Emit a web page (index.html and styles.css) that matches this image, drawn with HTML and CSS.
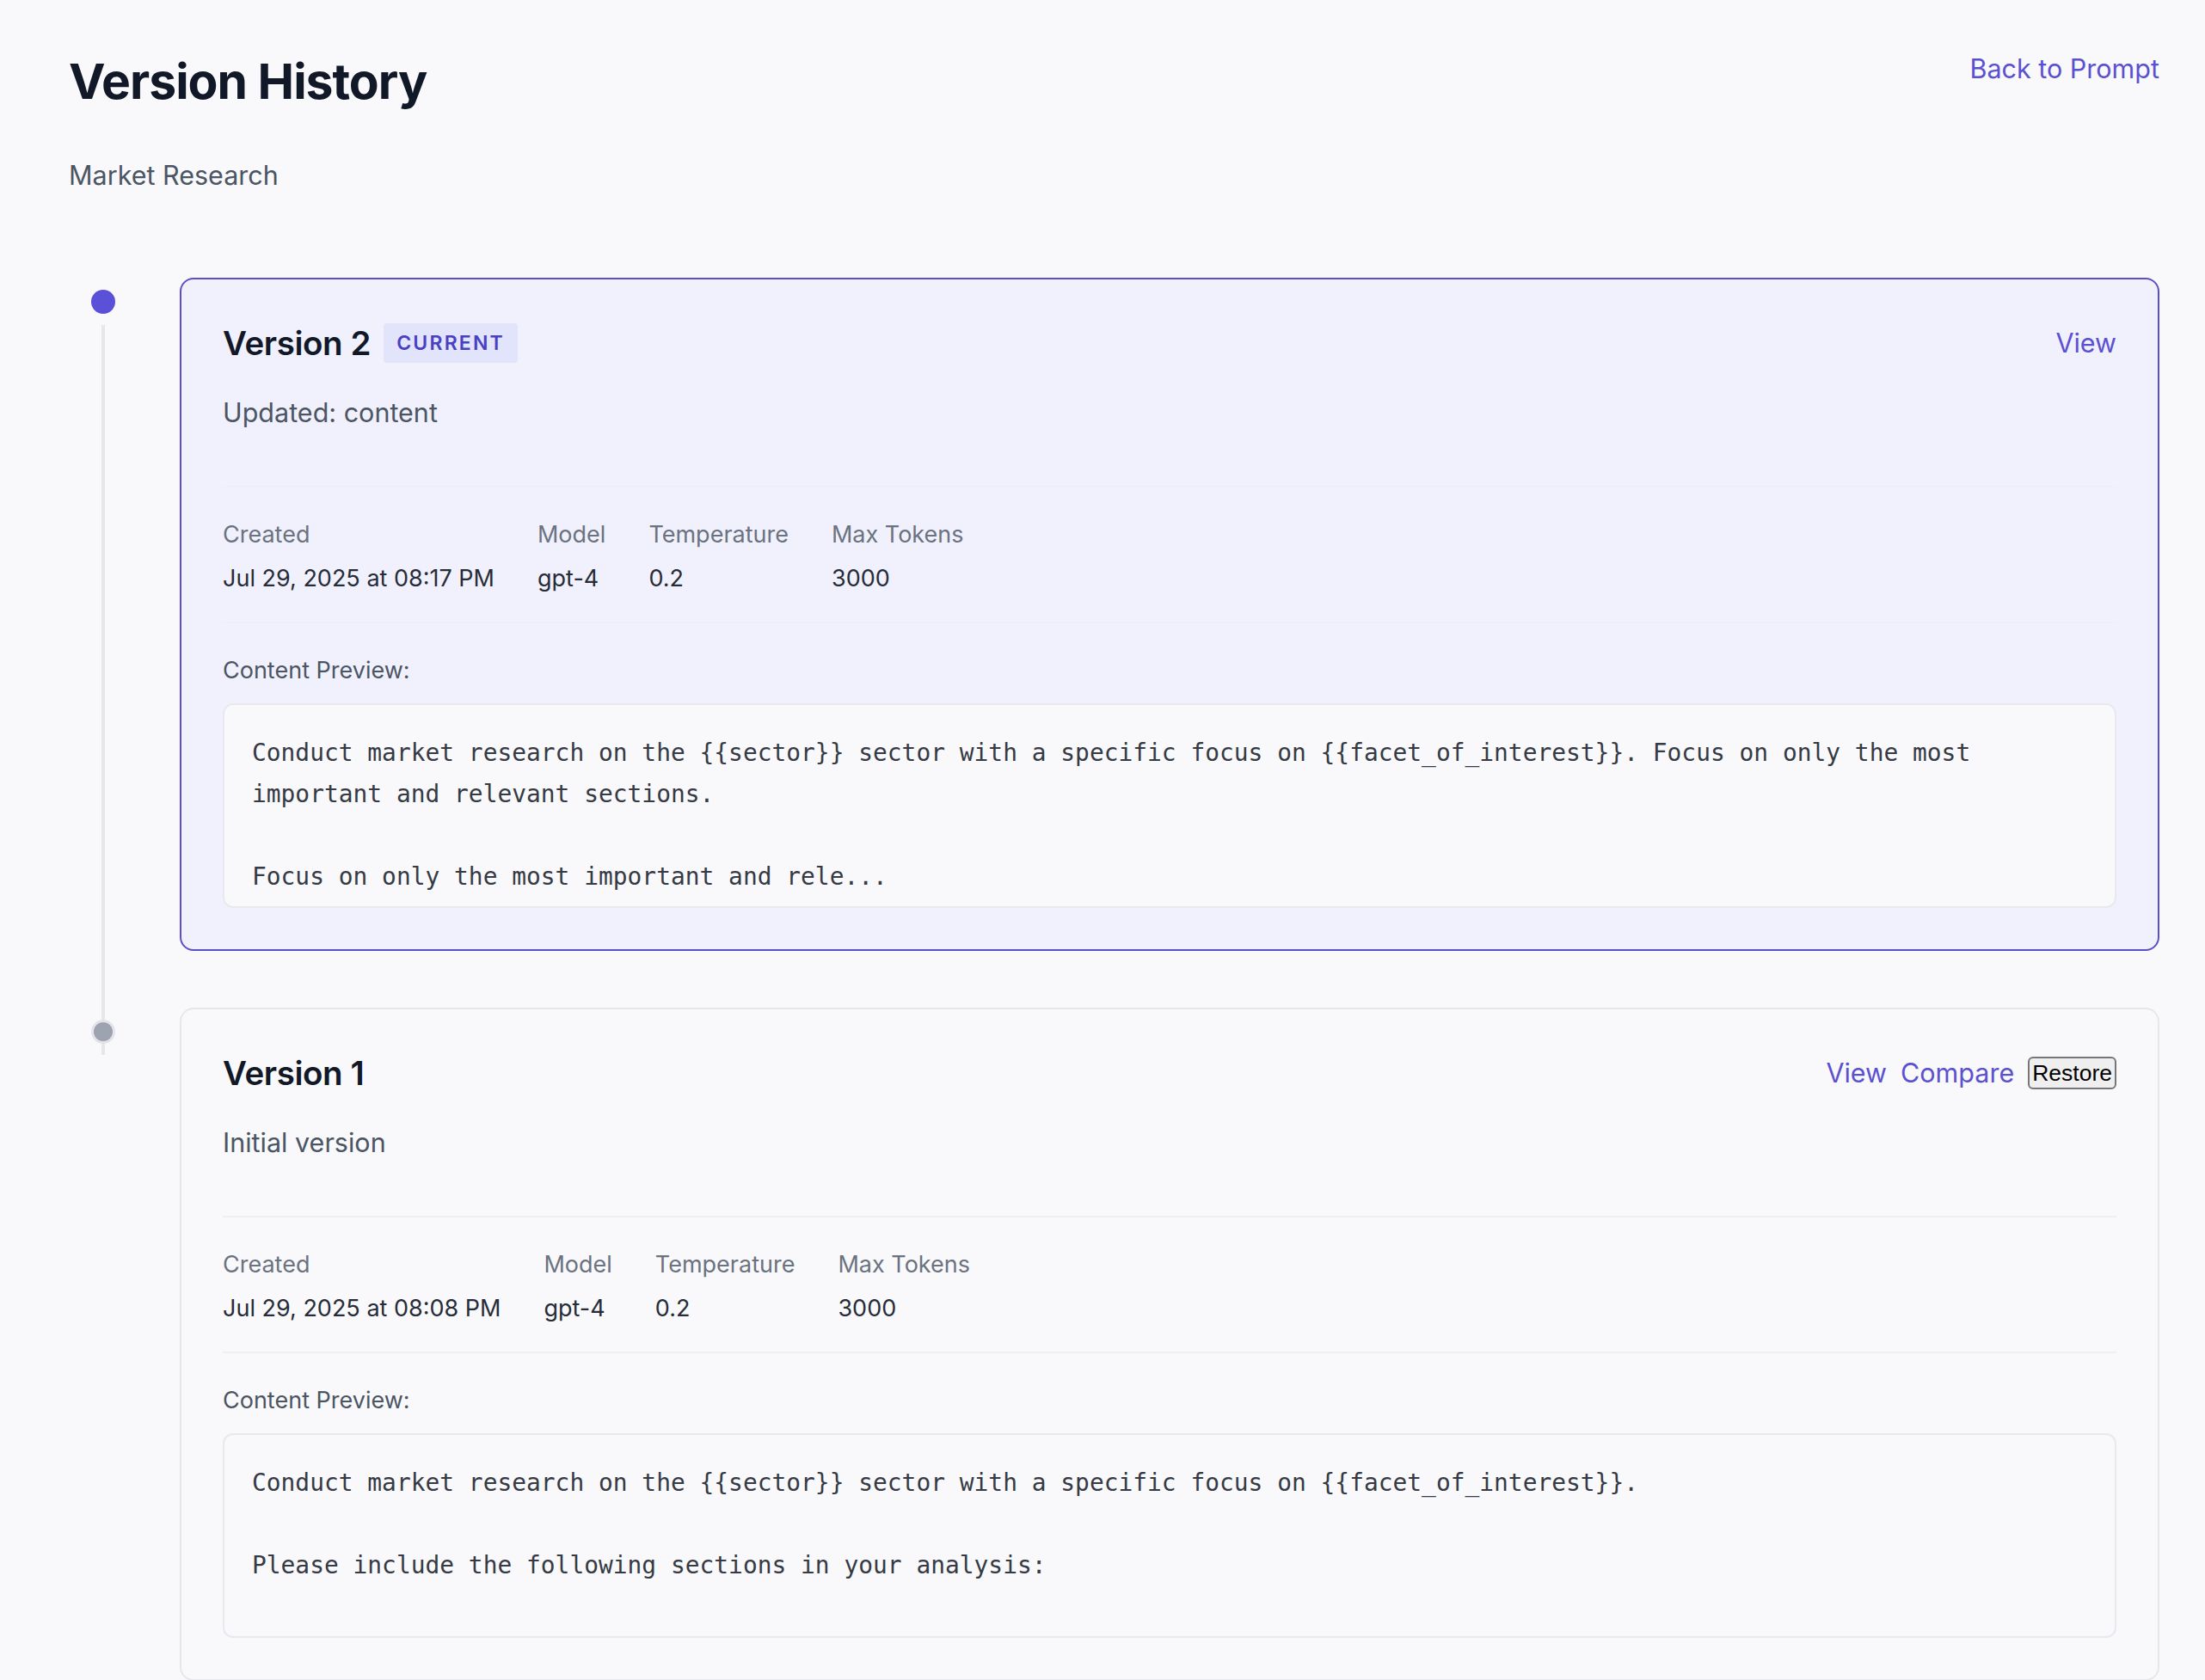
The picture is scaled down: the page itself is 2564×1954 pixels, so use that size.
FILE: index.html
```html
<!DOCTYPE html>
<html lang="en">
<head>
<meta charset="utf-8">
<title>Version History</title>
<link rel="stylesheet" href="styles.css">
</head>
<body>
<div class="page">
  <header class="top">
    <div class="heading">
      <h1 class="title">Version History</h1>
      <p class="subtitle">Market Research</p>
    </div>
    <a class="back link" href="#">Back to Prompt</a>
  </header>

  <div class="timeline">
    <div class="item">
      <div class="rail">
        <span class="line"></span>
        <span class="dot dot-current"></span>
      </div>
      <section class="card card-current">
        <div class="card-head">
          <div class="card-title">
            <h2 class="version">Version 2</h2>
            <span class="badge">CURRENT</span>
          </div>
          <div class="actions">
            <a class="link" href="#">View</a>
          </div>
        </div>
        <p class="desc">Updated: content</p>
        <div class="meta">
          <div class="meta-col"><div class="meta-label">Created</div><div class="meta-value">Jul 29, 2025 at 08:17 PM</div></div>
          <div class="meta-col"><div class="meta-label">Model</div><div class="meta-value">gpt-4</div></div>
          <div class="meta-col"><div class="meta-label">Temperature</div><div class="meta-value">0.2</div></div>
          <div class="meta-col"><div class="meta-label">Max Tokens</div><div class="meta-value">3000</div></div>
        </div>
        <div class="preview-label">Content Preview:</div>
        <div class="preview">Conduct market research on the {{sector}} sector with a specific focus on {{facet_of_interest}}. Focus on only the most important and relevant sections.

Focus on only the most important and rele...</div>
      </section>
    </div>

    <div class="item">
      <div class="rail">
        <span class="dot dot-past"></span>
      </div>
      <section class="card">
        <div class="card-head">
          <div class="card-title">
            <h2 class="version">Version 1</h2>
          </div>
          <div class="actions">
            <a class="link" href="#">View</a>
            <a class="link" href="#">Compare</a>
            <button class="restore" type="button">Restore</button>
          </div>
        </div>
        <p class="desc">Initial version</p>
        <div class="meta">
          <div class="meta-col"><div class="meta-label">Created</div><div class="meta-value">Jul 29, 2025 at 08:08 PM</div></div>
          <div class="meta-col"><div class="meta-label">Model</div><div class="meta-value">gpt-4</div></div>
          <div class="meta-col"><div class="meta-label">Temperature</div><div class="meta-value">0.2</div></div>
          <div class="meta-col"><div class="meta-label">Max Tokens</div><div class="meta-value">3000</div></div>
        </div>
        <div class="preview-label">Content Preview:</div>
        <div class="preview">Conduct market research on the {{sector}} sector with a specific focus on {{facet_of_interest}}.

Please include the following sections in your analysis:</div>
      </section>
    </div>
  </div>
</div>
</body>
</html>
```

FILE: styles.css
```css
html, body {
  margin: 0;
  padding: 0;
}

body {
  background: #f9f9fb;
  font-family: Inter, "Noto Sans", "Liberation Sans", sans-serif;
  color: #111827;
}

.page {
  padding: 59px 53px 60px 80px;
}

.top {
  display: flex;
  justify-content: space-between;
  align-items: flex-start;
}

.title {
  margin: 0;
  font-size: 57px;
  line-height: 72px;
  font-weight: 700;
  letter-spacing: -1px;
  color: #111827;
}

.subtitle {
  margin: 49px 0 0;
  font-size: 30.5px;
  line-height: 48px;
  color: #4b5563;
}

.link {
  color: #5b51d0;
  text-decoration: none;
  font-size: 30.5px;
  line-height: 42px;
}

.back {
  line-height: 42px;
}

.timeline {
  margin-top: 95px;
  display: flex;
  flex-direction: column;
  gap: 66px;
}

.item {
  position: relative;
  display: grid;
  grid-template-columns: 129px 1fr;
}

.rail {
  position: relative;
}

.line {
  position: absolute;
  left: 38px;
  top: 55px;
  width: 4px;
  height: calc(100% + 66px);
  background: #e5e7eb;
}

.dot {
  position: relative;
  z-index: 1;
  display: block;
  width: 28px;
  height: 28px;
  margin: 14px 0 0 26px;
  border-radius: 50%;
  box-sizing: border-box;
}

.dot-current {
  background: #5b50d8;
}

.dot-past {
  background: #9ca3af;
  border: 3px solid #e3e4e8;
}

.card {
  min-width: 0;
  border: 2px solid #e6e7eb;
  border-radius: 16px;
  padding: 48px;
  background: #f9f9fb;
}

.card-current {
  border-color: #5a4fc9;
  background: #f1f1fd;
}

.card-head {
  display: flex;
  justify-content: space-between;
  align-items: center;
  height: 52px;
}

.card-title {
  display: flex;
  align-items: center;
  gap: 15px;
}

.version {
  margin: 0;
  font-size: 38.5px;
  line-height: 52px;
  font-weight: 600;
  letter-spacing: -0.4px;
  color: #111827;
}

.badge {
  display: inline-block;
  padding: 8px 15px;
  font-size: 23px;
  line-height: 30px;
  font-weight: 600;
  letter-spacing: 2.2px;
  color: #4a40c2;
  background: #e1e4fb;
  border-radius: 4px;
}

.actions {
  display: flex;
  align-items: center;
  gap: 16px;
}

.restore {
  font-family: "Liberation Sans", Arial, sans-serif;
  font-size: 26.5px;
  line-height: 34px;
  padding: 0 3px;
  color: #000;
  background: #efefef;
  border: 2px solid #767676;
  border-radius: 6px;
}

.desc {
  margin: 31px 0 0;
  font-size: 30.5px;
  line-height: 48px;
  color: #4b5563;
}

.meta {
  margin-top: 61px;
  padding: 35px 0 30px;
  border-top: 2px solid #eeeff3;
  border-bottom: 2px solid #eeeff3;
  display: flex;
  gap: 50px;
}

.card-current .meta {
  border-color: #eeeff8;
}

.meta-label {
  font-size: 27px;
  line-height: 40px;
  color: #6b7280;
}

.meta-value {
  margin-top: 11px;
  font-size: 27px;
  line-height: 40px;
  color: #262c38;
}

.preview-label {
  margin-top: 35px;
  font-size: 27px;
  line-height: 40px;
  color: #4b5563;
}

.preview {
  margin-top: 18px;
  box-sizing: border-box;
  height: 238px;
  overflow: hidden;
  padding: 32px;
  border: 2px solid #e8e9ee;
  border-radius: 12px;
  background: #f9f9fb;
  font-family: "DejaVu Sans Mono", "Liberation Mono", monospace;
  font-size: 27.9px;
  line-height: 48px;
  color: #353a45;
  white-space: pre-wrap;
}
```
